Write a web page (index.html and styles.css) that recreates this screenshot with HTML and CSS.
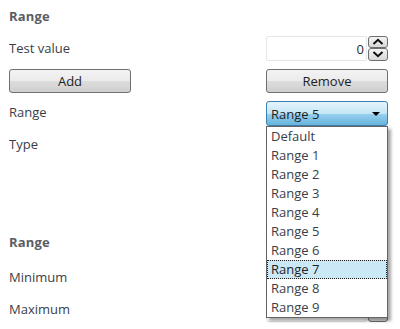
FILE: index.html
```html
<!DOCTYPE html>
<html lang="en">
<head>
    <meta charset="UTF-8">
    <title>Range settings</title>
    <link rel="stylesheet" href="styles.css">
</head>
<body>
    <div class="panel">
        <div class="row">
            <h2 class="section-title">Range</h2>
        </div>
        <div class="row row-field">
            <span class="label">Test value</span>
            <div class="numeric">
                <div class="numeric-box">0</div>
                <div class="spin">
                    <button class="spin-btn"><svg width="12" height="7" viewBox="0 0 12 7"><path d="M1.5 6 L6 1.8 L10.5 6" fill="none" stroke="#111" stroke-width="2"/></svg></button>
                    <button class="spin-btn"><svg width="12" height="7" viewBox="0 0 12 7"><path d="M1.5 1 L6 5.2 L10.5 1" fill="none" stroke="#111" stroke-width="2"/></svg></button>
                </div>
            </div>
        </div>
        <div class="row row-field">
            <button class="btn btn-add">Add</button>
            <button class="btn">Remove</button>
        </div>
        <div class="row row-field">
            <span class="label">Range</span>
            <div class="combo-wrap">
                <div class="combo">
                    <span>Range 5</span>
                    <span class="arrow"></span>
                </div>
                <!-- open dropdown list -->
                <ul class="dropdown">
                    <li>Default</li>
                    <li>Range 1</li>
                    <li>Range 2</li>
                    <li>Range 3</li>
                    <li>Range 4</li>
                    <li>Range 5</li>
                    <li>Range 6</li>
                    <li class="hover">Range 7</li>
                    <li>Range 8</li>
                    <li>Range 9</li>
                </ul>
            </div>
        </div>
        <div class="row row-field">
            <span class="label">Type</span>
        </div>
        <div class="spacer"></div>
        <div class="row">
            <h2 class="section-title">Range</h2>
        </div>
        <div class="row row-field row-lower">
            <span class="label">Minimum</span>
        </div>
        <div class="row row-field">
            <span class="label">Maximum</span>
            <div class="numeric">
                <div class="numeric-box"></div>
                <div class="spin">
                    <button class="spin-btn"></button>
                    <button class="spin-btn"></button>
                </div>
            </div>
        </div>
    </div>
</body>
</html>
```

FILE: styles.css
```css
* {
    margin: 0;
    padding: 0;
    box-sizing: border-box;
}

body {
    background-color: #ffffff;
    color: #3a3e48;
    font-family: 'Open Sans', 'Noto Sans', sans-serif;
    font-size: 13px;
}

.panel {
    width: 400px;
    padding: 0 12px 0 9px;
}

.row {
    display: flex;
    align-items: center;
    justify-content: space-between;
    height: 32px;
}

.row-lower {
    margin-top: 3px;
}

.section-title {
    font-size: 13px;
    font-weight: bold;
    color: #5a5d63;
    letter-spacing: 0.2px;
}

.label {
    line-height: 16px;
}

.spacer {
    height: 66px;
}

/* numeric up-down */
.numeric {
    display: flex;
    width: 122px;
    height: 25px;
}

.numeric-box {
    flex: 1;
    border: 1px solid #e3e6ea;
    border-radius: 2px;
    text-align: right;
    padding: 3px 2px 0 0;
    color: #2c2c2c;
    font-size: 13px;
}

.spin {
    display: flex;
    flex-direction: column;
    width: 20px;
    margin-left: 1px;
}

.spin-btn {
    flex: 1;
    display: flex;
    align-items: center;
    justify-content: center;
    border: 1px solid #6e6e6e;
    border-radius: 3px;
    background: linear-gradient(#f4f4f4, #d8d8d8);
}

/* push buttons */
.btn {
    width: 122px;
    height: 24px;
    border: 1px solid #707070;
    border-radius: 3px;
    background: linear-gradient(#f3f3f3 0%, #ebebeb 50%, #dddddd 51%, #cfcfcf 100%);
    font-family: inherit;
    font-size: 13px;
    color: #1e1e1e;
    margin-top: 1px;
}

/* combo box */
.combo-wrap {
    position: relative;
    width: 122px;
    margin-top: 3px;
}

.combo {
    display: flex;
    align-items: center;
    justify-content: space-between;
    height: 25px;
    padding: 0 7px 0 4px;
    border: 1px solid #3c7fb1;
    border-radius: 3px;
    background: linear-gradient(#e5f4fc 0%, #c4e5f6 50%, #98d1ef 51%, #68b3db 100%);
    color: #1e1e1e;
    font-size: 13px;
}

.arrow {
    width: 0;
    height: 0;
    border-left: 4px solid transparent;
    border-right: 4px solid transparent;
    border-top: 4px solid #000;
}

.dropdown {
    position: absolute;
    top: 25px;
    left: 0;
    width: 122px;
    list-style: none;
    background: #fff;
    border: 1px solid #646464;
    box-shadow: 3px 3px 3px rgba(0, 0, 0, 0.35);
    z-index: 10;
    padding: 0;
}

.dropdown li {
    height: 19px;
    line-height: 17px;
    padding-left: 3px;
    font-size: 13px;
    color: #3a3e48;
    border: 1px solid transparent;
}

.dropdown li.hover {
    background: #cbe8f6;
    border: 1px dotted #202020;
    color: #1e1e1e;
}
```
